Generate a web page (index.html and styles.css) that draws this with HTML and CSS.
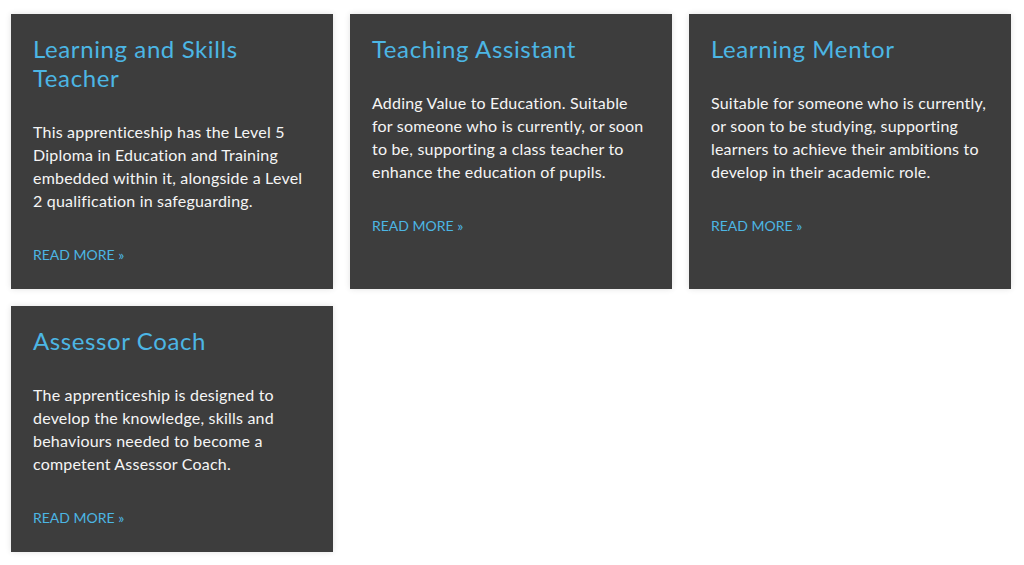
FILE: index.html
```html
<!DOCTYPE html>
<html lang="en">
    <head>
        <meta charset="UTF-8">
        <meta name="viewport" content="width=device-width, initial-scale=1.0">
        <title>Apprenticeships</title>
        <link rel="stylesheet" href="styles.css">
    </head>
    <body>
        <main class="courses">
            <article class="course">
                <h2 class="course__title">Learning and Skills Teacher</h2>
                <p class="course__desc">This apprenticeship has the Level 5
                    Diploma in Education and Training embedded within it,
                    alongside a Level 2 qualification in safeguarding.</p>
                <a class="course__more" href="#">Read More »</a>
            </article>
            <article class="course">
                <h2 class="course__title">Teaching Assistant</h2>
                <p class="course__desc">Adding Value to Education. Suitable
                    for someone who is currently, or soon to be, supporting a
                    class teacher to enhance the education of pupils.</p>
                <a class="course__more" href="#">Read More »</a>
            </article>
            <article class="course">
                <h2 class="course__title">Learning Mentor</h2>
                <p class="course__desc">Suitable for someone who is currently,
                    or soon to be studying, supporting learners to achieve
                    their ambitions to develop in their academic role.</p>
                <a class="course__more" href="#">Read More »</a>
            </article>
            <article class="course">
                <h2 class="course__title">Assessor Coach</h2>
                <p class="course__desc">The apprenticeship is designed to
                    develop the knowledge, skills and behaviours needed to
                    become a competent Assessor Coach.</p>
                <a class="course__more" href="#">Read More »</a>
            </article>
        </main>
    </body>
</html>
```

FILE: styles.css
```css
:root {
    --color-card: #3d3d3d;
    --color-accent: #4cb6e4;
    --color-text: #f5f5f5;
}

body {
    margin: 0;
    background-color: #fff;
    font-family: Lato, "Open Sans", sans-serif;
}

.courses {
    display: grid;
    grid-template-columns: repeat(3, 322px);
    gap: 17px;
    padding: 14px 11px;
}

.course {
    display: flex;
    flex-direction: column;
    align-items: flex-start;
    background-color: var(--color-card);
    box-shadow: 0 0 6px rgba(0, 0, 0, 0.12);
    padding: 20px 22px 24px;
}

.course__title {
    margin: 0;
    font-size: 24px;
    font-weight: 400;
    line-height: 29px;
    letter-spacing: 0.6px;
    color: var(--color-accent);
}

.course__desc {
    margin: 28px 0 0;
    font-size: 16px;
    line-height: 23px;
    letter-spacing: 0.2px;
    color: var(--color-text);
}

.course__more {
    margin-top: 33px;
    font-size: 14px;
    line-height: 20px;
    text-transform: uppercase;
    text-decoration: none;
    color: var(--color-accent);
}
```
